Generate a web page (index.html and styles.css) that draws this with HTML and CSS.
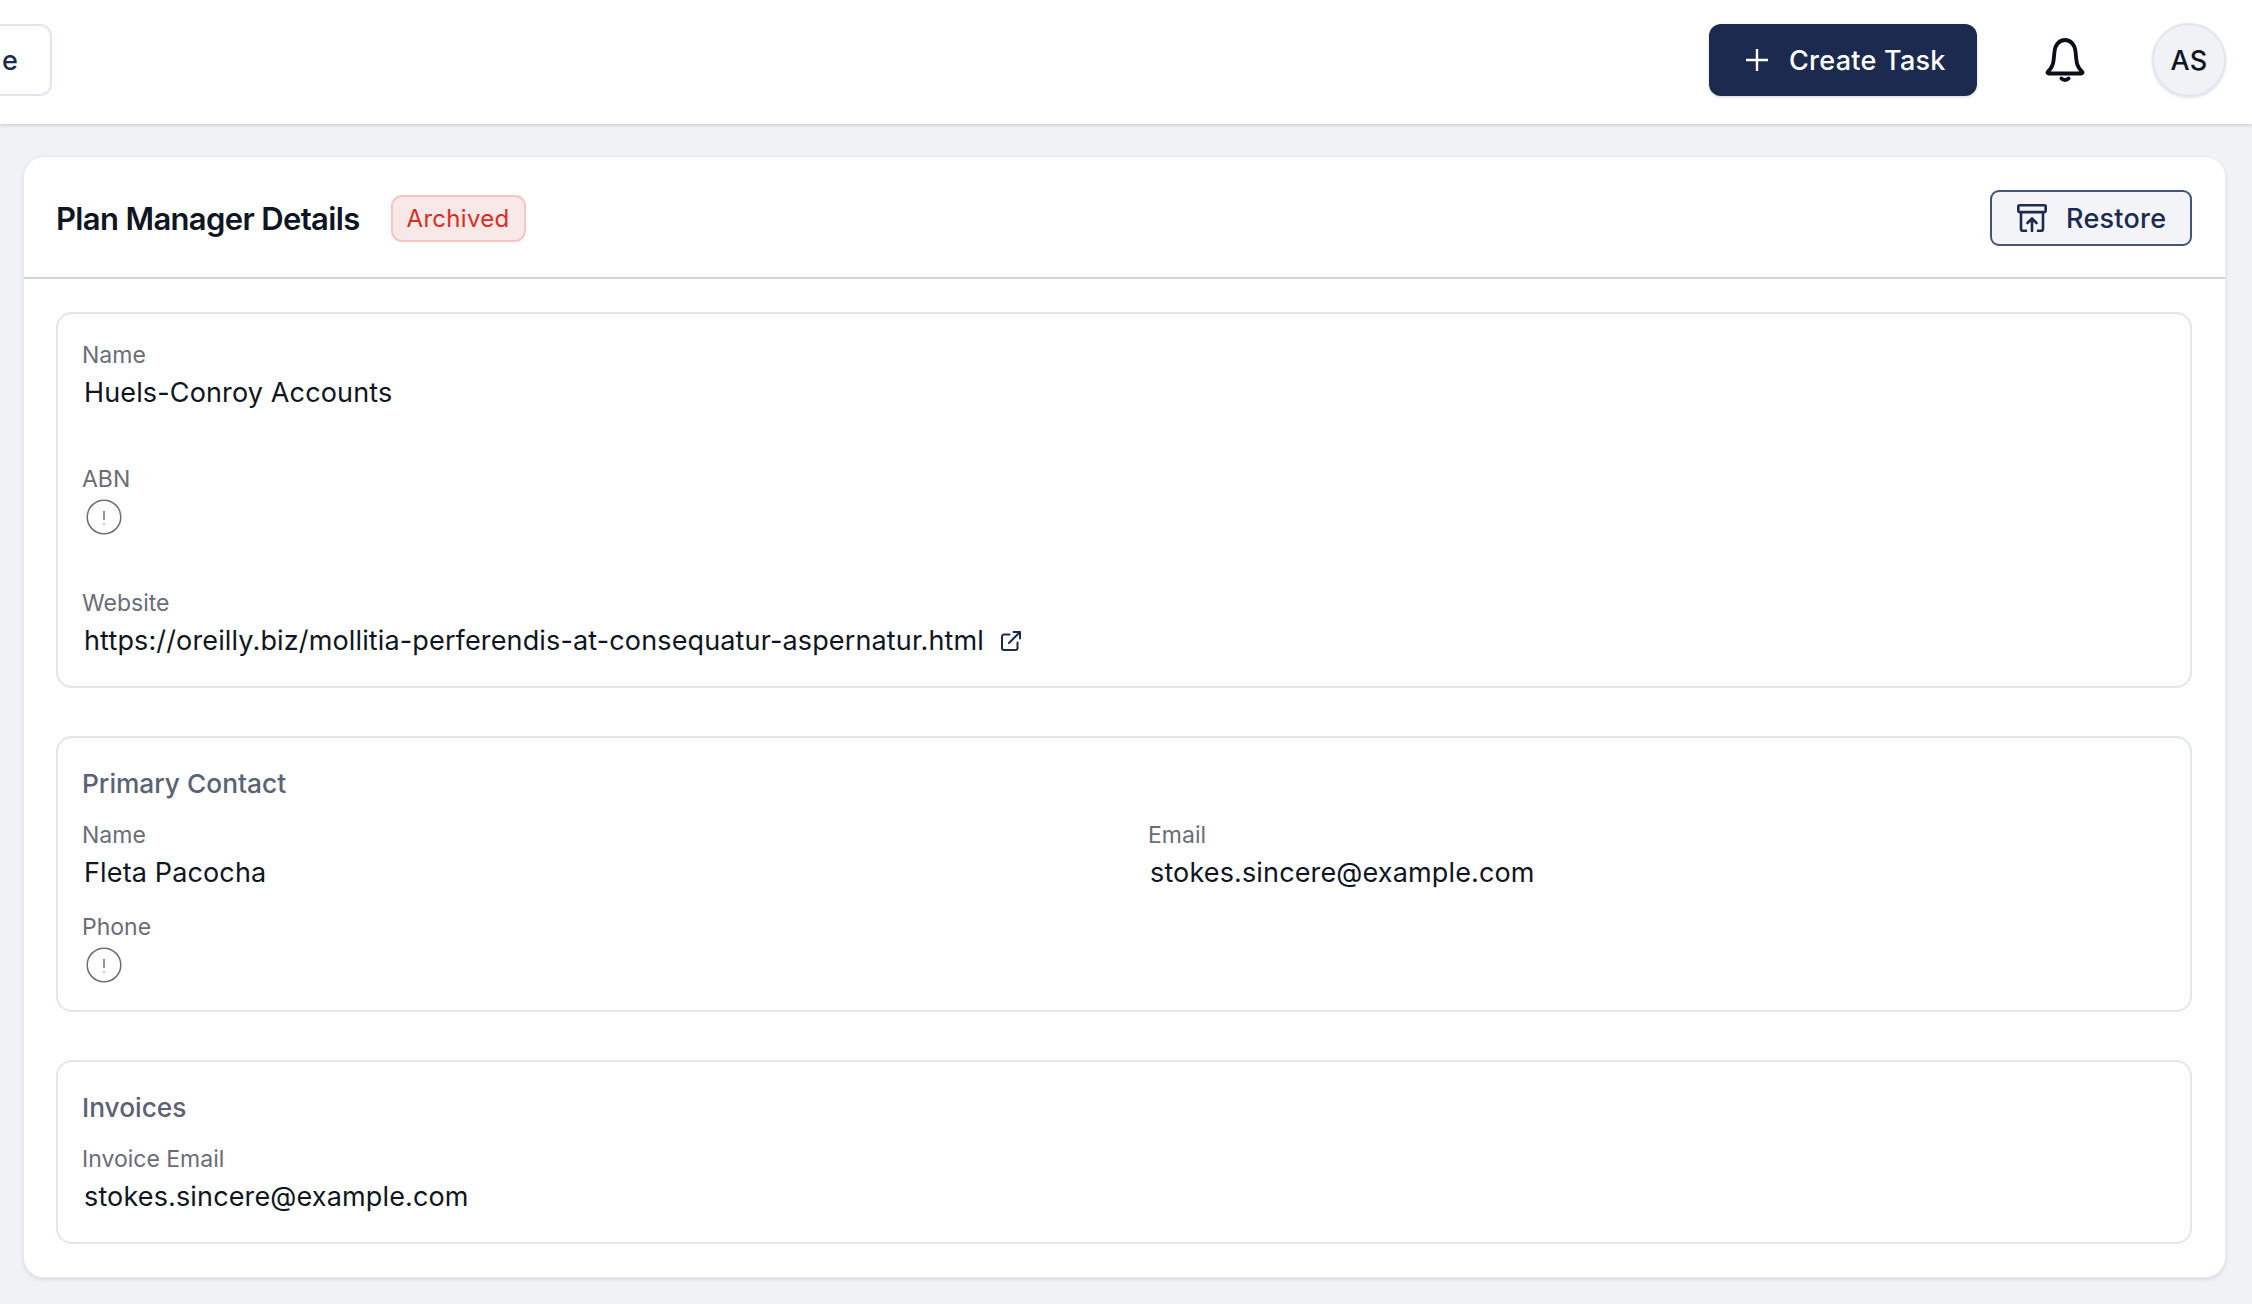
FILE: index.html
```html
<!DOCTYPE html>
<html lang="en">
<head>
<meta charset="utf-8">
<title>Plan Manager Details</title>
<link rel="stylesheet" href="styles.css">
</head>
<body>
<header class="topbar">
  <button class="stub-btn">e</button>
  <div class="topbar-actions">
    <button class="create-btn">
      <svg class="plus-icon" viewBox="0 0 22 22" fill="none" stroke="currentColor" stroke-width="2.4"><path d="M11 0v22M0 11h22"/></svg>
      <span>Create Task</span>
    </button>
    <svg class="bell-icon" viewBox="0 0 40 44" fill="none" stroke="#0b0f19" stroke-width="3.800" stroke-linecap="round" stroke-linejoin="round"><path d="M3 33.500c3.500-3 5.200-6.500 5.700-12l.8-8C10.200 6.500 14.500 2 20 2s9.800 4.500 10.500 11.500l.8 8c.5 5.500 2.200 9 5.700 12 1 1 .5 2-1 2H4c-1.500 0-2-1-1-2z"/><path d="M16.500 40.500c1.800 2 5.200 2 7 0" stroke-width="4"/></svg>
    <div class="avatar">AS</div>
  </div>
</header>
<main class="page">
  <section class="card">
    <div class="card-header">
      <div class="title-group">
        <h1 class="card-title">Plan Manager Details</h1>
        <span class="badge">Archived</span>
      </div>
      <button class="restore-btn">
        <svg class="restore-icon" viewBox="0 0 30 28" fill="none" stroke="currentColor" stroke-width="2.600" stroke-linecap="round" stroke-linejoin="round"><rect x="1.300" y="1.300" width="27.400" height="6.800" rx="1.500"/><path d="M4 8.500v16.500a1.800 1.800 0 0 0 1.800 1.800H9M26 8.500v16.500a1.800 1.800 0 0 1-1.800 1.800H21M15 27v-12M10.500 19l4.500-4.500 4.500 4.500"/></svg>
        <span>Restore</span>
      </button>
    </div>
    <div class="card-body">
      <div class="panel panel-stack">
        <div class="field">
          <div class="field-label">Name</div>
          <div class="field-value">Huels-Conroy Accounts</div>
        </div>
        <div class="field">
          <div class="field-label">ABN</div>
          <div class="field-value">
            <svg class="alert-icon" viewBox="0 0 36 36" fill="none" stroke="#6c6f7a" stroke-width="1.500"><circle cx="18" cy="18" r="16.800"/><path d="M18 12v9M18 24.500v1"/></svg>
          </div>
        </div>
        <div class="field">
          <div class="field-label">Website</div>
          <div class="field-value link-row">
            <span>https://oreilly.biz/mollitia-perferendis-at-consequatur-aspernatur.html</span>
            <svg class="link-icon" viewBox="0 0 20 20" fill="none" stroke="#1c2a4f" stroke-width="2" stroke-linecap="round" stroke-linejoin="round"><path d="M8.500 3.500H3a2 2 0 0 0-2 2V17a2 2 0 0 0 2 2h11.500a2 2 0 0 0 2-2v-5.500M8 12 19 1M12.500 1H19v6.500"/></svg>
          </div>
        </div>
      </div>
      <div class="panel panel-titled">
        <h2 class="panel-title">Primary Contact</h2>
        <div class="field-grid">
          <div class="field">
            <div class="field-label">Name</div>
            <div class="field-value">Fleta Pacocha</div>
          </div>
          <div class="field">
            <div class="field-label">Email</div>
            <div class="field-value">stokes.sincere@example.com</div>
          </div>
          <div class="field">
            <div class="field-label">Phone</div>
            <div class="field-value">
              <svg class="alert-icon" viewBox="0 0 36 36" fill="none" stroke="#6c6f7a" stroke-width="1.500"><circle cx="18" cy="18" r="16.800"/><path d="M18 12v9M18 24.500v1"/></svg>
            </div>
          </div>
        </div>
      </div>
      <div class="panel panel-titled">
        <h2 class="panel-title">Invoices</h2>
        <div class="field">
          <div class="field-label">Invoice Email</div>
          <div class="field-value">stokes.sincere@example.com</div>
        </div>
      </div>
    </div>
  </section>
</main>
</body>
</html>
```

FILE: styles.css
```css
* { box-sizing: border-box; }

html, body {
  height: 100%;
}

body {
  margin: 0;
  background: #f0f2f6;
  font-family: Inter, "Liberation Sans", sans-serif;
  overflow: hidden;
}

button {
  font-family: inherit;
}

.topbar {
  height: 124px;
  background: #fff;
  box-shadow: 0 1px 4px rgba(30, 40, 70, 0.22);
  display: flex;
  align-items: center;
  justify-content: space-between;
  padding: 0 26px 4px 0;
}

.stub-btn {
  width: 81px;
  height: 72px;
  margin-left: -29px;
  padding: 0 0 0 29px;
  text-align: left;
  background: #fff;
  border: 2px solid #e2e6f1;
  border-radius: 12px;
  color: #1c2a4f;
  font-size: 27px;
  font-weight: 500;
}

.topbar-actions {
  display: flex;
  align-items: center;
}

.create-btn {
  width: 268px;
  height: 72px;
  display: flex;
  align-items: center;
  gap: 21px;
  padding: 0 0 0 37px;
  background: #1c2a4f;
  border: 0;
  border-radius: 12px;
  color: #fff;
  font-size: 27px;
  font-weight: 500;
  letter-spacing: 0.26px;
  box-shadow: 0 1px 3px rgba(20, 30, 60, 0.18);
}

.plus-icon {
  width: 22px;
  height: 22px;
}

.bell-icon {
  width: 40px;
  height: 44px;
  margin-left: 68px;
}

.avatar {
  width: 74px;
  height: 74px;
  margin-left: 67px;
  border-radius: 50%;
  background: #f0f2f6;
  border: 2px solid #e2e6f1;
  box-shadow: 0 1px 3px rgba(30, 40, 70, 0.15);
  display: flex;
  align-items: center;
  justify-content: center;
  color: #0f1522;
  font-size: 27px;
  font-weight: 500;
  letter-spacing: 0.26px;
}

.page {
  padding: 33px 27px 27px 24px;
}

.card {
  background: #fff;
  border-radius: 20px;
  box-shadow: 0 0 0 1px #e6e9f1, 0 2px 5px rgba(30, 40, 70, 0.14);
}

.card-header {
  height: 122px;
  display: flex;
  align-items: center;
  justify-content: space-between;
  padding: 2px 33px 0 32px;
  border-bottom: 2px solid #cfd3dc;
}

.title-group {
  display: flex;
  align-items: center;
  gap: 31px;
}

.card-title {
  margin: 0;
  color: #0f1522;
  font-size: 31px;
  font-weight: 600;
  letter-spacing: -0.65px;
}

.badge {
  height: 47px;
  display: flex;
  align-items: center;
  padding: 0 14px;
  background: #f9e8e8;
  border: 2px solid #f5c4c4;
  border-radius: 11px;
  color: #d92d20;
  font-size: 24px;
  font-weight: 400;
  letter-spacing: 0.3px;
}

.restore-btn {
  width: 202px;
  height: 56px;
  display: flex;
  align-items: center;
  gap: 19px;
  padding: 0 0 0 25px;
  background: #f2f4f7;
  border: 2px solid #46547a;
  border-radius: 9px;
  color: #1c2a4f;
  font-size: 27px;
  font-weight: 500;
  letter-spacing: 0.26px;
}

.restore-icon {
  width: 30px;
  height: 28px;
}

.card-body {
  display: flex;
  flex-direction: column;
  gap: 48px;
  padding: 33px 33px 33px 32px;
}

.panel {
  display: flex;
  flex-direction: column;
  gap: 16px;
  padding: 24px;
  border: 2px solid #e2e6f1;
  border-radius: 16px;
}

.panel-stack {
  gap: 48px;
}

.panel-titled {
  padding-top: 26px;
}

.panel-title {
  margin: 0;
  color: #5b6275;
  font-size: 26.300px;
  font-weight: 500;
  line-height: 38px;
  padding-top: 1px;
  height: 38px;
}

.field-grid {
  display: grid;
  grid-template-columns: 1fr 1fr;
  column-gap: 48px;
  row-gap: 16px;
}

.field-label {
  color: #6b6c78;
  font-size: 23px;
  line-height: 34px;
}

.field-value {
  height: 42px;
  display: flex;
  align-items: center;
  padding-left: 2px;
  color: #0f1522;
  font-size: 27px;
  letter-spacing: 0.14px;
  line-height: 42px;
}

.alert-icon {
  width: 36px;
  height: 36px;
  margin-left: 2px;
}

.link-row {
  gap: 17px;
}

.link-icon {
  width: 20px;
  height: 20px;
}
```
